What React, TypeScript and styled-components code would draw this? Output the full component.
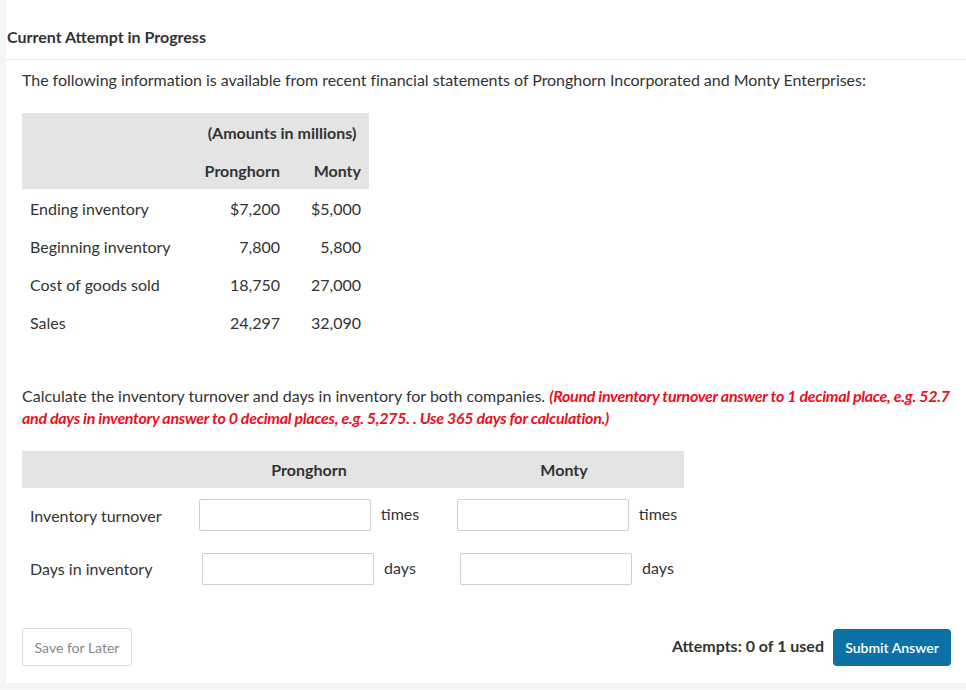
import React from "react";
import styled, { createGlobalStyle } from "styled-components";

const Global = createGlobalStyle`
  html, body { margin: 0; padding: 0; background: #f5f5f5; }
  body { font-family: Lato, "Open Sans", sans-serif; color: #333; }
  * { box-sizing: border-box; }
`;

const Page = styled.div`
  padding: 0 0 7px 6px;
  width: 966px;
`;

const Panel = styled.div`
  background: #fff;
  height: 683px;
  display: flex;
  flex-direction: column;
`;

const Header = styled.div`
  padding: 26px 0 12px 1px;
  border-bottom: 1px solid #e6e6e6;
`;

const Title = styled.h2`
  margin: 0;
  font-size: 16px;
  line-height: 21px;
  font-weight: 700;
  color: #333;
`;

const Body = styled.div`
  padding: 0 15px 0 16px;
  display: flex;
  flex-direction: column;
`;

const Para = styled.p`
  margin: 9px 0 0;
  font-size: 16px;
  line-height: 22px;
  letter-spacing: -0.04px;
`;

const Instruction = styled.p`
  margin: 44px 0 0;
  font-size: 16px;
  line-height: 22px;
  white-space: nowrap;
`;

const Red = styled.em`
  color: #e8101d;
  font-weight: 700;
  font-style: italic;
  letter-spacing: -0.3px;
`;

const DataTable = styled.div`
  margin-top: 22px;
  display: grid;
  grid-template-columns: 173px 93px 81px;
  width: 347px;
  font-size: 16px;
`;

const HeadCell = styled.div<{ $span?: number; $align?: string }>`
  background: #e4e4e4;
  height: 38px;
  display: flex;
  align-items: center;
  justify-content: ${(p) => p.$align || "flex-end"};
  padding: 0 8px;
  font-weight: 700;
  grid-column: span ${(p) => p.$span || 1};
`;

const Cell = styled.div<{ $num?: boolean }>`
  height: 38px;
  display: flex;
  align-items: center;
  justify-content: ${(p) => (p.$num ? "flex-end" : "flex-start")};
  padding: 0 8px;
`;

const AnswerTable = styled.div`
  margin-top: 22px;
  display: grid;
  grid-template-columns: 168px 238px 256px;
  width: 662px;
  font-size: 16px;
`;

const AnsHead = styled.div<{ $shift?: number }>`
  background: #e4e4e4;
  height: 37px;
  display: flex;
  align-items: center;
  justify-content: center;
  font-weight: 700;
  padding-left: ${(p) => p.$shift || 0}px;
`;

const AnsLabel = styled.div<{ $h: number }>`
  height: ${(p) => p.$h}px;
  display: flex;
  align-items: center;
  padding: 0 8px;
`;

const AnsCell = styled.div<{ $h: number; $shift?: number }>`
  height: ${(p) => p.$h}px;
  display: flex;
  align-items: center;
  justify-content: center;
  gap: 10px;
  padding-left: ${(p) => p.$shift || 0}px;
`;

const Input = styled.input`
  width: 172px;
  height: 32px;
  border: 1px solid #cfcfcf;
  border-radius: 2px;
  background: #fff;
  font-family: inherit;
  font-size: 15px;
  padding: 0 6px;
  outline: none;
`;

const Unit = styled.span`
  font-size: 16px;
  margin-top: -3px;
`;

const Footer = styled.div`
  margin-top: 33px;
  display: flex;
  align-items: center;
  justify-content: space-between;
`;

const SaveButton = styled.button`
  width: 110px;
  height: 38px;
  border: 1px solid #dcdcdc;
  border-radius: 3px;
  background: #fff;
  color: #888;
  font-family: Lato, sans-serif;
  font-size: 14px;
  cursor: pointer;
`;

const Right = styled.div`
  display: flex;
  align-items: center;
  gap: 9px;
`;

const Attempts = styled.span`
  font-weight: 700;
  font-size: 16px;
  color: #333;
  margin-top: -3px;
`;

const SubmitButton = styled.button`
  width: 118px;
  height: 37px;
  border: none;
  border-radius: 4px;
  background: #0b72a6;
  color: #fff;
  font-family: Lato, sans-serif;
  font-size: 14px;
  font-weight: 600;
  cursor: pointer;
`;

const rows = [
  ["Ending inventory", "$7,200", "$5,000"],
  ["Beginning inventory", "7,800", "5,800"],
  ["Cost of goods sold", "18,750", "27,000"],
  ["Sales", "24,297", "32,090"],
];

export default function App() {
  return (
    <>
      <Global />
      <Page>
        <Panel>
          <Header>
            <Title>Current Attempt in Progress</Title>
          </Header>
          <Body>
            <Para>
              The following information is available from recent financial statements of Pronghorn
              Incorporated and Monty Enterprises:
            </Para>
            <DataTable>
              <HeadCell />
              <HeadCell $span={2} $align="center">(Amounts in millions)</HeadCell>
              <HeadCell />
              <HeadCell>Pronghorn</HeadCell>
              <HeadCell>Monty</HeadCell>
              {rows.map((r) => (
                <React.Fragment key={r[0]}>
                  <Cell>{r[0]}</Cell>
                  <Cell $num>{r[1]}</Cell>
                  <Cell $num>{r[2]}</Cell>
                </React.Fragment>
              ))}
            </DataTable>
            <Instruction>
              Calculate the inventory turnover and days in inventory for both companies.{" "}
              <Red>
                (Round inventory turnover answer to 1 decimal place, e.g. 52.7
                <br />
                and days in inventory answer to 0 decimal places, e.g. 5,275. . Use 365 days for
                calculation.)
              </Red>
            </Instruction>
            <AnswerTable>
              <AnsHead />
              <AnsHead $shift={0}>Pronghorn</AnsHead>
              <AnsHead $shift={16}>Monty</AnsHead>
              <AnsLabel $h={54}>Inventory turnover</AnsLabel>
              <AnsCell $h={54}>
                <Input />
                <Unit>times</Unit>
              </AnsCell>
              <AnsCell $h={54} $shift={22}>
                <Input />
                <Unit>times</Unit>
              </AnsCell>
              <AnsLabel $h={53}>Days in inventory</AnsLabel>
              <AnsCell $h={53}>
                <Input />
                <Unit>days</Unit>
              </AnsCell>
              <AnsCell $h={53} $shift={22}>
                <Input />
                <Unit>days</Unit>
              </AnsCell>
            </AnswerTable>
            <Footer>
              <SaveButton>Save for Later</SaveButton>
              <Right>
                <Attempts>Attempts: 0 of 1 used</Attempts>
                <SubmitButton>Submit Answer</SubmitButton>
              </Right>
            </Footer>
          </Body>
        </Panel>
      </Page>
    </>
  );
}
